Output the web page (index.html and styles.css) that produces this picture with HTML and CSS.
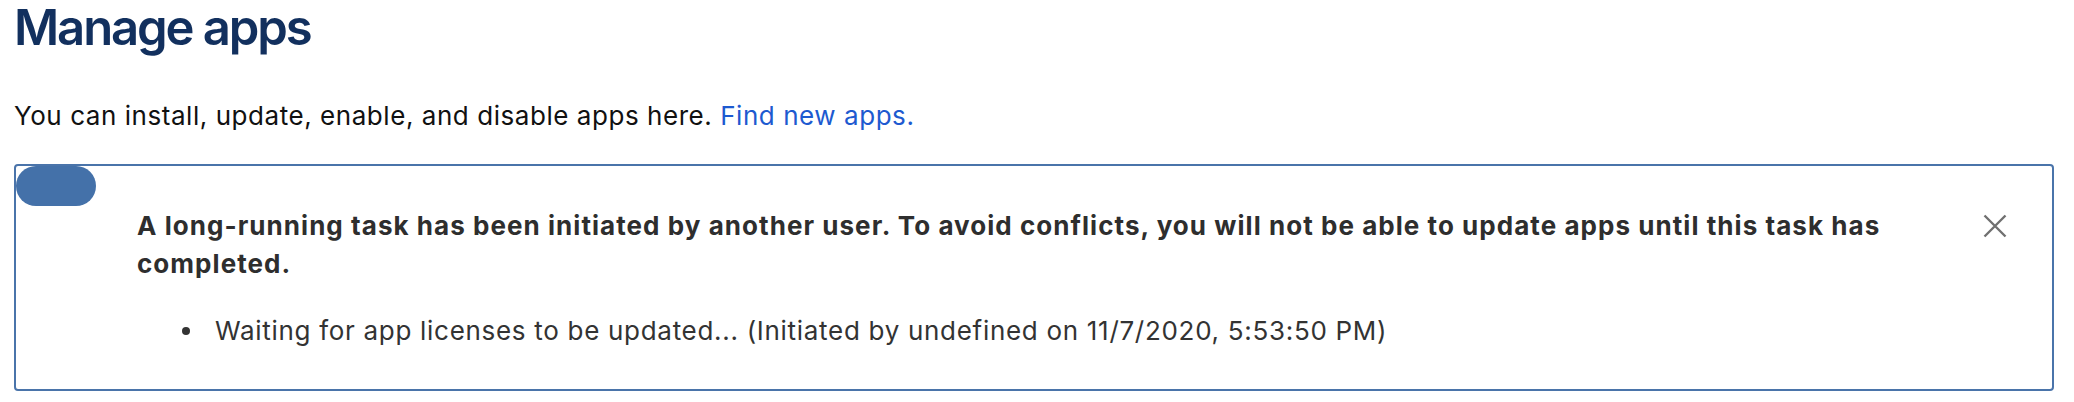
FILE: index.html
```html
<!DOCTYPE html>
<html lang="en">
<head>
<meta charset="utf-8">
<title>Manage apps</title>
<link rel="stylesheet" href="styles.css">
</head>
<body>
<main class="page">
  <h1 class="title">Manage apps</h1>
  <p class="intro">You can install, update, enable, and disable apps here. <a class="link" href="#">Find new apps.</a></p>
  <section class="notice">
    <div class="notice-icon"><span class="pill"></span></div>
    <div class="notice-body">
      <p class="notice-title">A long-running task has been initiated by another user. To avoid conflicts, you will not be able to update apps until this task has completed.</p>
      <ul class="notice-list">
        <li class="notice-item">Waiting for app licenses to be updated... (Initiated by undefined on 11/7/2020, 5:53:50 PM)</li>
      </ul>
    </div>
    <button class="close" type="button" aria-label="Close">
      <svg width="24" height="24" viewBox="0 0 24 24" aria-hidden="true"><path d="M1.5 1.5 L22.5 22.5 M22.5 1.5 L1.5 22.5" stroke="#707070" stroke-width="2.4" fill="none"/></svg>
    </button>
  </section>
</main>
</body>
</html>
```

FILE: styles.css
```css
html, body {
  margin: 0;
  padding: 0;
  background: #ffffff;
}

.page {
  padding: 0 20px 0 14px;
  font-family: Inter, "Noto Sans", "Liberation Sans", sans-serif;
}

.title {
  margin: 0;
  font-size: 49px;
  line-height: 56px;
  font-weight: 600;
  color: #12305e;
  letter-spacing: -2.1px;
}

.intro {
  margin: 42px 0 0 0;
  font-size: 26px;
  line-height: 36px;
  letter-spacing: 0.55px;
  color: #111111;
}

.link {
  color: #1d5ad0;
  text-decoration: none;
}

.notice {
  margin-top: 30px;
  display: flex;
  align-items: flex-start;
  border: 2px solid #4a74aa;
  border-radius: 4px;
}

.notice-icon {
  flex: 0 0 80px;
  display: flex;
}

.pill {
  display: block;
  width: 80px;
  height: 40px;
  border-radius: 20px;
  background: #4471a9;
}

.notice-body {
  flex: 0 1 1770px;
  margin-left: 41px;
  padding: 41px 0 39px 0;
}

.notice-title {
  margin: 0;
  font-size: 26px;
  line-height: 38px;
  font-weight: 700;
  letter-spacing: 1.05px;
  color: #2e2e2e;
}

.notice-list {
  margin: 29px 0 0 0;
  padding-left: 78px;
  list-style: none;
  font-size: 26px;
  line-height: 38px;
  letter-spacing: 0.7px;
  color: #333333;
}

.notice-item {
  position: relative;
}

.notice-item::before {
  content: "";
  position: absolute;
  left: -33px;
  top: 15px;
  width: 8px;
  height: 8px;
  border-radius: 50%;
  background: #333333;
}

.close {
  margin: 48px 45px 0 auto;
  padding: 0;
  border: 0;
  background: none;
  width: 24px;
  height: 24px;
  display: flex;
  flex: 0 0 24px;
}
```
